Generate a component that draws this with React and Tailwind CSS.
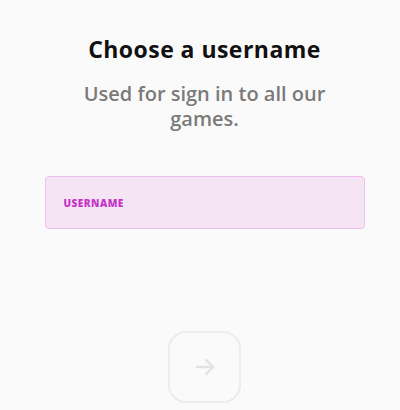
export default function App() {
  return (
    <div
      className="w-[400px] h-[410px] bg-[#fafafa] flex flex-col items-center overflow-hidden pl-[9px]"
      style={{ fontFamily: "'Open Sans', 'Noto Sans', sans-serif" }}
    >
      <h1 className="mt-[34px] text-[23px] leading-[30px] font-bold tracking-[0.02em] text-[#111]">
        Choose a username
      </h1>
      <p className="mt-[17px] w-[270px] text-center text-[20px] leading-[25px] font-semibold text-[#7a7a7a]">
        Used for sign in to all our games.
      </p>

      <div className="mt-[45px] w-[320px] h-[53px] rounded-[4px] border border-[#efc0ef] bg-[#f4e4f4] flex items-center px-[18px]">
        <span className="text-[10px] leading-none font-extrabold tracking-[0.05em] text-[#c536c8]">
          USERNAME
        </span>
      </div>

      <button className="mt-[102px] w-[73px] h-[72px] rounded-[18px] border-2 border-[#ececec] flex items-center justify-center">
        <svg width="28" height="28" viewBox="0 0 24 24" fill="none" stroke="#e2e2e2" strokeWidth="2" strokeLinecap="round" strokeLinejoin="round">
          <path d="M5 12h14" />
          <path d="M13 6l6 6-6 6" />
        </svg>
      </button>
    </div>
  );
}
